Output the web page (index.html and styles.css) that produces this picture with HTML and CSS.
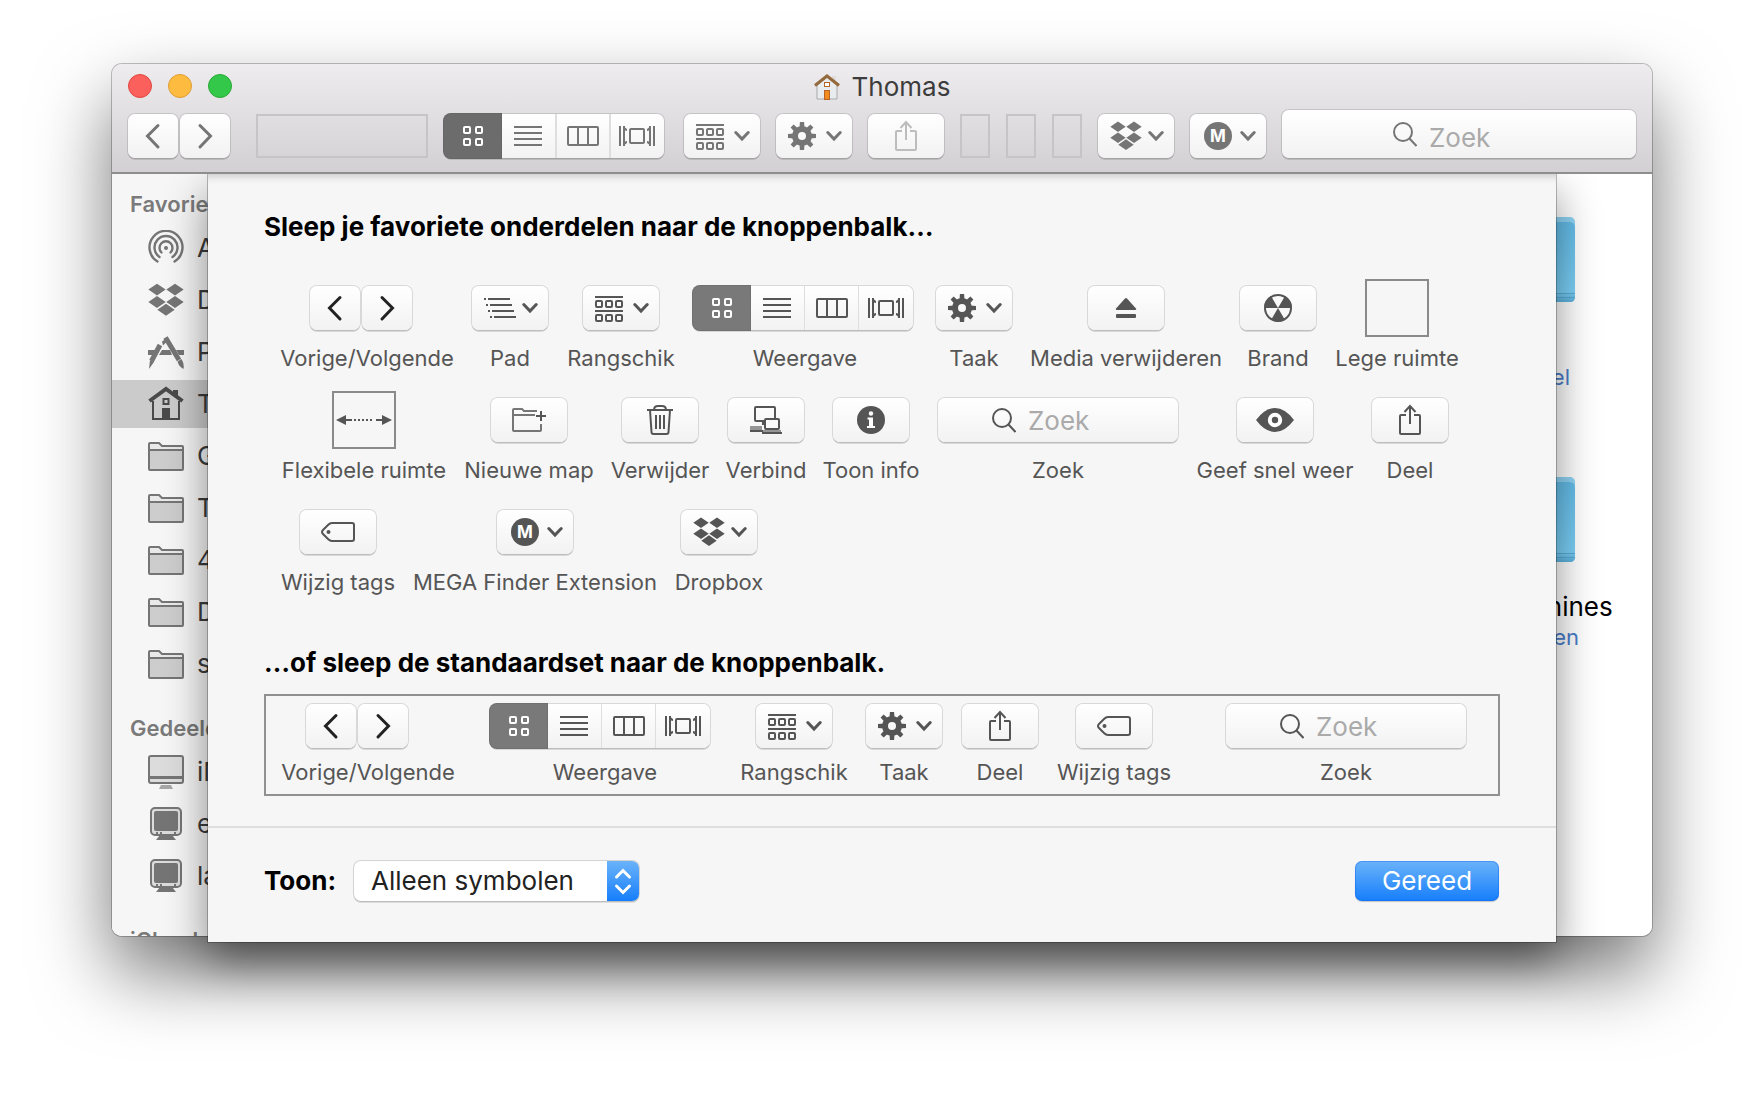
FILE: index.html
```html
<!DOCTYPE html>
<html lang="nl">
<head>
<meta charset="utf-8">
<title>Thomas</title>
<link rel="stylesheet" href="styles.css">
</head>
<body>
<svg class="sprite" aria-hidden="true">
  <symbol id="prev" viewBox="0 0 32 32"><path class="ln3" d="M21 5.500 10.500 16 21 27"/></symbol>
  <symbol id="next" viewBox="0 0 32 32"><path class="ln3" d="M11 5.500 21.500 16 11 27"/></symbol>
  <symbol id="chev" viewBox="0 0 16 16"><path class="ln3" d="M1.800 4.500 8 11l6.200-6.500"/></symbol>
  <symbol id="grid" viewBox="0 0 32 32"><g class="ln"><rect x="7" y="7" width="6" height="6" rx="1"/><rect x="19" y="7" width="6" height="6" rx="1"/><rect x="7" y="19" width="6" height="6" rx="1"/><rect x="19" y="19" width="6" height="6" rx="1"/></g></symbol>
  <symbol id="list" viewBox="0 0 32 32"><path class="ln" d="M2 7h28M2 13h28M2 19h28M2 25h28"/></symbol>
  <symbol id="cols" viewBox="0 0 32 32"><path class="ln" d="M11 7v18M21 7v18"/><rect class="ln" x="1" y="7" width="30" height="18" rx="1"/></symbol>
  <symbol id="flow" viewBox="0 0 36 32"><path class="ln" d="M1 6v20M35 6v20M5 6v20M31 6v20"/><path class="fl" d="M4 6l4 3v2l-4-1zM4 26l4-3v-2l-4 1zM32 6l-4 3v2l4-1zM32 26l-4-3v-2l4 1z"/><rect class="ln" x="11" y="9" width="14" height="14" rx="1"/></symbol>
  <symbol id="arrange" viewBox="0 0 32 32"><path class="ln" d="M0 5h28M0 19h28"/><g class="ln"><rect x="1" y="9" width="6" height="6" rx="1"/><rect x="11" y="9" width="6" height="6" rx="1"/><rect x="21" y="9" width="6" height="6" rx="1"/><rect x="1" y="23" width="6" height="6" rx="1"/><rect x="11" y="23" width="6" height="6" rx="1"/><rect x="21" y="23" width="6" height="6" rx="1"/></g></symbol>
  <symbol id="path" viewBox="0 0 32 32"><path class="ln" d="M0 7h2M4 7h22M2 13h2M6 13h22M4 19h2M8 19h22M6 25h2M10 25h22"/></symbol>
  <symbol id="gear" viewBox="0 0 32 32"><g class="fl"><circle class="gear-ring" cx="14" cy="16" r="7"/><path id="tooth" d="M11.500 8l.4-6h4.200l.4 6zM11.500 24l.4 6h4.200l.4-6z"/><use href="#tooth" transform="rotate(45 14 16)"/><use href="#tooth" transform="rotate(90 14 16)"/><use href="#tooth" transform="rotate(135 14 16)"/></g></symbol>
  <symbol id="share" viewBox="0 0 32 32"><path class="ln" d="M12 11H7a1 1 0 0 0-1 1v17a1 1 0 0 0 1 1h18a1 1 0 0 0 1-1V12a1 1 0 0 0-1-1h-5M16 20V2M10.500 8 16 2l5.500 6"/></symbol>
  <symbol id="dropbox" viewBox="0 0 32 32"><path class="fl" d="M8 1.500l7.700 5.200L8 12 .300 6.700zM24 1.500l7.700 5.200L24 12l-7.700-5.300zM8 12.500l7.700 5.200L8 23 .300 17.700zM24 12.500l7.700 5.200L24 23l-7.700-5.300zM16 19.300l7.700 5.400L16 30l-7.700-5.300z"/></symbol>
  <symbol id="mega" viewBox="0 0 32 32"><circle class="fl" cx="16" cy="16" r="14"/><text class="mega-m" x="16" y="22" text-anchor="middle">M</text></symbol>
  <symbol id="eject" viewBox="0 0 32 32"><path class="fl" d="M15 6.400q1-1 2 0l9 10q.8 1.600-1 1.600H7q-1.800 0-1-1.600z"/><rect class="fl" x="6" y="22" width="20" height="4" rx="1"/></symbol>
  <symbol id="burn" viewBox="0 0 32 32"><circle class="ln" cx="16" cy="16" r="13"/><path class="fl" d="M16 16 9 3.900A14 14 0 0 0 2 16zM16 16l7-12.100A14 14 0 0 1 30 16zM16 16l-7 12.100a14 14 0 0 0 14 0z"/></symbol>
  <symbol id="stretch" viewBox="0 0 60 58"><path class="fl" d="M2 27l10-5v10zM58 27l-10-5v10z"/><path class="ln" d="M11 27h7M42 27h7M20 27h2M24 27h2M28 27h2M32 27h2M36 27h2"/></symbol>
  <symbol id="newfolder" viewBox="0 0 36 32"><path class="ln soft" d="M26 7H13l-2-2H3a1 1 0 0 0-1 1v20a1 1 0 0 0 1 1h26a1 1 0 0 0 1-1v-6M2 11h22"/><path class="ln" d="M30 7v10M25 12h10"/></symbol>
  <symbol id="trash" viewBox="0 0 32 32"><path class="ln" d="M3 6h26M6 6l1.500 22a2 2 0 0 0 2 2h13a2 2 0 0 0 2-2L26 6M10 6q0-4 4-4h4q4 0 4 4M12 11v14M16 11v14M20 11v14"/></symbol>
  <symbol id="connect" viewBox="0 0 32 32"><rect class="ln" x="5" y="3" width="20" height="14" rx="1"/><path class="hf" d="M0 22h12v4H0zM13 26h18v2H13z"/><path class="fl" d="M0 26h13v2H0zM12 28h20v2H12zM12 18h3v3h-3z"/><rect class="ln lap" x="15" y="15" width="14" height="10" rx="1"/></symbol>
  <symbol id="info" viewBox="0 0 32 32"><circle class="fl" cx="16" cy="16" r="14"/><circle class="wh" cx="16" cy="9.500" r="2.200"/><path class="wh" d="M12.500 13.500h5.500v8.500h2v2h-8v-2h2v-6.500h-1.500z"/></symbol>
  <symbol id="eye" viewBox="0 0 40 32"><path class="fl" d="M1 16Q10 4 20 4t19 12Q30 28 20 28T1 16z"/><circle class="pupil" cx="20" cy="16" r="5.200"/></symbol>
  <symbol id="tag" viewBox="0 0 36 32"><path class="ln" d="M12 7h20a2 2 0 0 1 2 2v14a2 2 0 0 1-2 2H12q-2 0-4-2l-5-5q-2-2 0-4l5-5q2-2 4-2z"/><circle class="fl" cx="8.500" cy="16" r="2"/></symbol>
  <symbol id="glass" viewBox="0 0 24 26"><circle class="ln" cx="10" cy="11" r="9"/><path class="ln" d="M16.500 17.500 23.500 25"/></symbol>

  <symbol id="airdrop" viewBox="0 0 36 36"><g class="ln2"><path d="M9.500 31.500A16.500 16.500 0 1 1 26.500 31.500"/><path d="M11.500 27A11.500 11.500 0 1 1 24.500 27"/><path d="M13.500 22.500A6.500 6.500 0 1 1 22.500 22.500"/></g><circle class="fl" cx="18" cy="18" r="2"/></symbol>
  <symbol id="apps" viewBox="0 0 36 36"><path class="fl" d="M0 16h9l-3 5H0zM14 16h8l2 5H11zM28 16h8v5h-5z"/><path class="tool" d="M12 11 3.500 27M17.500 3.500 31 26"/><path class="fl" d="M14 7.500l3-2 1 3-3 3zM2 26l4 2-5 7zM29.500 27.500l4-2.500q3 5 2 10-5-3-6-7.500z"/></symbol>
  <symbol id="home" viewBox="0 0 36 36"><path class="ln" d="M5 15v18h26V15"/><path class="roof" d="M1.500 15 18 3l16.500 12"/><path class="fl" d="M25 4h5v8l-5-4zM14 22h8v11h-8z"/><rect class="ln" x="15.500" y="13" width="5" height="5"/></symbol>
  <symbol id="folder" viewBox="0 0 36 36"><path class="fold-back" d="M1 12V6a1 1 0 0 1 1-1h9l3 3h20a1 1 0 0 1 1 1v3z"/><rect class="fold" x="1" y="12" width="34" height="20" rx="1"/></symbol>
  <symbol id="imac" viewBox="0 0 36 36"><path class="hf" d="M13 31h10l2 4H11z"/><rect class="scr" x="1" y="2" width="34" height="27" rx="2"/><path class="fl" d="M1 22h34v3H1z"/></symbol>
  <symbol id="crt" viewBox="0 0 36 36"><path class="fl" d="M12 29h12l4 5H8z"/><rect class="scr" x="3" y="2" width="30" height="27" rx="4"/><rect class="fl" x="6" y="5" width="24" height="20" rx="2"/><path class="fl" d="M8 26h2v2H8zM12 26h2v2h-2zM26 26h2v2h-2z"/></symbol>
  <linearGradient id="blue" x1="0" y1="0" x2="0" y2="1"><stop offset="0" stop-color="#64bde9"/><stop offset=".88" stop-color="#7cd1f8"/><stop offset="1" stop-color="#5db3e0"/></linearGradient>
  <symbol id="bigfolder" viewBox="0 0 130 86"><rect x="0" y="0" width="130" height="85" rx="5" fill="#8fd4f5"/><path d="M0 5h124q6 0 6 6v69q0 5-5 5H5q-5 0-5-5z" fill="url(#blue)"/><path d="M0 76.500h130M0 80.500h130" stroke="#58acd8" stroke-width="1"/></symbol>
</svg>

<main class="window">
  <header class="titlebar">
    <div class="title-row">
      <div class="lights">
        <button class="light red" aria-label="Sluit"></button>
        <button class="light amber" aria-label="Minimaliseer"></button>
        <button class="light green" aria-label="Vergroot"></button>
      </div>
      <h1 class="title">
        <svg class="title-icon" viewBox="0 0 26 26" aria-hidden="true"><path d="M18 2h4v7h-4z" fill="#ddd"/><path d="M3 11 13 3l10 8v14H3z" fill="#e9ecee" stroke="#a8a8a8"/><path d="M1 11.500 13 2l12 9.500" fill="none" stroke="#94693b" stroke-width="3"/><rect x="10.500" y="8.500" width="5" height="4" fill="#fff" stroke="#b5652a"/><rect x="10.500" y="16.500" width="5" height="9" fill="#f28c1e" stroke="#b5652a"/></svg>
        Thomas
      </h1>
    </div>
    <div class="toolbar">
      <div class="nav">
        <button class="btn" aria-label="Vorige"><svg class="ic"><use href="#prev"/></svg></button>
        <button class="btn" aria-label="Volgende"><svg class="ic"><use href="#next"/></svg></button>
      </div>
      <div class="space space-wide"></div>
      <div class="seg">
        <button class="on" aria-label="Symbolen"><svg class="ic"><use href="#grid"/></svg></button>
        <button aria-label="Lijst"><svg class="ic"><use href="#list"/></svg></button>
        <button aria-label="Kolommen"><svg class="ic"><use href="#cols"/></svg></button>
        <button aria-label="Cover Flow"><svg class="ic ic-36"><use href="#flow"/></svg></button>
      </div>
      <button class="btn menu" aria-label="Rangschik"><svg class="ic"><use href="#arrange"/></svg><svg class="chev"><use href="#chev"/></svg></button>
      <button class="btn menu" aria-label="Taak"><svg class="ic"><use href="#gear"/></svg><svg class="chev"><use href="#chev"/></svg></button>
      <button class="btn" aria-label="Deel" disabled><svg class="ic"><use href="#share"/></svg></button>
      <div class="space"></div>
      <div class="space"></div>
      <div class="space"></div>
      <button class="btn menu" aria-label="Dropbox"><svg class="ic"><use href="#dropbox"/></svg><svg class="chev"><use href="#chev"/></svg></button>
      <button class="btn menu" aria-label="MEGA"><svg class="ic"><use href="#mega"/></svg><svg class="chev"><use href="#chev"/></svg></button>
      <label class="search"><svg class="glass"><use href="#glass"/></svg><input type="search" placeholder="Zoek" aria-label="Zoek"></label>
    </div>
  </header>

  <div class="body">
    <nav class="sidebar">
      <h2>Favorieten</h2>
      <ul>
        <li><a href="#"><svg><use href="#airdrop"/></svg>AirDrop</a></li>
        <li><a href="#"><svg><use href="#dropbox"/></svg>Drop</a></li>
        <li><a href="#"><svg><use href="#apps"/></svg>Pro</a></li>
        <li><a href="#" class="current"><svg><use href="#home"/></svg>Tho</a></li>
        <li><a href="#"><svg><use href="#folder"/></svg>G</a></li>
        <li><a href="#"><svg><use href="#folder"/></svg>T</a></li>
        <li><a href="#"><svg><use href="#folder"/></svg>4</a></li>
        <li><a href="#"><svg><use href="#folder"/></svg>D</a></li>
        <li><a href="#"><svg><use href="#folder"/></svg>s</a></li>
      </ul>
      <h2>Gedeeld</h2>
      <ul>
        <li><a href="#"><svg><use href="#imac"/></svg>iMac</a></li>
        <li><a href="#"><svg><use href="#crt"/></svg>e</a></li>
        <li><a href="#"><svg><use href="#crt"/></svg>la</a></li>
      </ul>
      <h2>iCloud</h2>
    </nav>
    <section class="files">
      <div class="file"><svg class="file-icon"><use href="#bigfolder"/></svg><span class="file-name"></span><span class="file-note">1 onderdeel</span></div>
      <div class="file"><svg class="file-icon"><use href="#bigfolder"/></svg><span class="file-name">Virtual Machines</span><span class="file-note">4 onderdelen</span></div>
    </section>
  </div>

  <section class="sheet">
    <div class="palette">
      <h2>Sleep je favoriete onderdelen naar de knoppenbalk…</h2>
      <div class="row row-1">
        <div class="item"><div class="pic pic-nav"><div class="nav"><button class="btn" aria-label="Vorige"><svg class="ic"><use href="#prev"/></svg></button><button class="btn" aria-label="Volgende"><svg class="ic"><use href="#next"/></svg></button></div></div><span>Vorige/Volgende</span></div>
        <div class="item"><div class="pic"><button class="btn menu" aria-label="Pad"><svg class="ic"><use href="#path"/></svg><svg class="chev"><use href="#chev"/></svg></button></div><span>Pad</span></div>
        <div class="item"><div class="pic"><button class="btn menu" aria-label="Rangschik"><svg class="ic"><use href="#arrange"/></svg><svg class="chev"><use href="#chev"/></svg></button></div><span>Rangschik</span></div>
        <div class="item"><div class="pic pic-seg"><div class="seg"><button class="on" aria-label="Symbolen"><svg class="ic"><use href="#grid"/></svg></button><button aria-label="Lijst"><svg class="ic"><use href="#list"/></svg></button><button aria-label="Kolommen"><svg class="ic"><use href="#cols"/></svg></button><button aria-label="Cover Flow"><svg class="ic ic-36"><use href="#flow"/></svg></button></div></div><span>Weergave</span></div>
        <div class="item"><div class="pic"><button class="btn menu" aria-label="Taak"><svg class="ic"><use href="#gear"/></svg><svg class="chev"><use href="#chev"/></svg></button></div><span>Taak</span></div>
        <div class="item"><div class="pic"><button class="btn" aria-label="Media verwijderen"><svg class="ic"><use href="#eject"/></svg></button></div><span>Media verwijderen</span></div>
        <div class="item"><div class="pic"><button class="btn" aria-label="Brand"><svg class="ic"><use href="#burn"/></svg></button></div><span>Brand</span></div>
        <div class="item"><div class="pic"><div class="gap-box"></div></div><span>Lege ruimte</span></div>
      </div>
      <div class="row row-2">
        <div class="item"><div class="pic"><div class="gap-box"><svg class="stretch"><use href="#stretch"/></svg></div></div><span>Flexibele ruimte</span></div>
        <div class="item"><div class="pic"><button class="btn" aria-label="Nieuwe map"><svg class="ic ic-36"><use href="#newfolder"/></svg></button></div><span>Nieuwe map</span></div>
        <div class="item"><div class="pic"><button class="btn" aria-label="Verwijder"><svg class="ic"><use href="#trash"/></svg></button></div><span>Verwijder</span></div>
        <div class="item"><div class="pic"><button class="btn" aria-label="Verbind"><svg class="ic"><use href="#connect"/></svg></button></div><span>Verbind</span></div>
        <div class="item"><div class="pic"><button class="btn" aria-label="Toon info"><svg class="ic"><use href="#info"/></svg></button></div><span>Toon info</span></div>
        <div class="item"><div class="pic"><label class="search"><svg class="glass"><use href="#glass"/></svg><input type="search" placeholder="Zoek" aria-label="Zoek"></label></div><span>Zoek</span></div>
        <div class="item"><div class="pic"><button class="btn" aria-label="Geef snel weer"><svg class="ic ic-40"><use href="#eye"/></svg></button></div><span>Geef snel weer</span></div>
        <div class="item"><div class="pic"><button class="btn" aria-label="Deel"><svg class="ic"><use href="#share"/></svg></button></div><span>Deel</span></div>
      </div>
      <div class="row row-3">
        <div class="item"><div class="pic"><button class="btn" aria-label="Wijzig tags"><svg class="ic ic-36"><use href="#tag"/></svg></button></div><span>Wijzig tags</span></div>
        <div class="item"><div class="pic"><button class="btn menu" aria-label="MEGA Finder Extension"><svg class="ic"><use href="#mega"/></svg><svg class="chev"><use href="#chev"/></svg></button></div><span>MEGA Finder Extension</span></div>
        <div class="item"><div class="pic"><button class="btn menu" aria-label="Dropbox"><svg class="ic"><use href="#dropbox"/></svg><svg class="chev"><use href="#chev"/></svg></button></div><span>Dropbox</span></div>
      </div>
      <h2>…of sleep de standaardset naar de knoppenbalk.</h2>
      <div class="default-set">
        <div class="item set-nav"><div class="pic"><div class="nav"><button class="btn" aria-label="Vorige"><svg class="ic"><use href="#prev"/></svg></button><button class="btn" aria-label="Volgende"><svg class="ic"><use href="#next"/></svg></button></div></div><span>Vorige/Volgende</span></div>
        <div class="item set-view"><div class="pic pic-seg"><div class="seg"><button class="on" aria-label="Symbolen"><svg class="ic"><use href="#grid"/></svg></button><button aria-label="Lijst"><svg class="ic"><use href="#list"/></svg></button><button aria-label="Kolommen"><svg class="ic"><use href="#cols"/></svg></button><button aria-label="Cover Flow"><svg class="ic ic-36"><use href="#flow"/></svg></button></div></div><span>Weergave</span></div>
        <div class="item set-arrange"><div class="pic"><button class="btn menu" aria-label="Rangschik"><svg class="ic"><use href="#arrange"/></svg><svg class="chev"><use href="#chev"/></svg></button></div><span>Rangschik</span></div>
        <div class="item set-small"><div class="pic"><button class="btn menu" aria-label="Taak"><svg class="ic"><use href="#gear"/></svg><svg class="chev"><use href="#chev"/></svg></button></div><span>Taak</span></div>
        <div class="item set-small"><div class="pic"><button class="btn" aria-label="Deel"><svg class="ic"><use href="#share"/></svg></button></div><span>Deel</span></div>
        <div class="item set-tags"><div class="pic"><button class="btn" aria-label="Wijzig tags"><svg class="ic ic-36"><use href="#tag"/></svg></button></div><span>Wijzig tags</span></div>
        <div class="item set-search"><div class="pic"><label class="search"><svg class="glass"><use href="#glass"/></svg><input type="search" placeholder="Zoek" aria-label="Zoek"></label></div><span>Zoek</span></div>
      </div>
    </div>
    <footer class="footer">
      <label class="show-label" for="show">Toon:</label>
      <div class="popup">
        <select id="show"><option>Alleen symbolen</option></select>
        <svg class="popup-arrows" viewBox="0 0 32 40" aria-hidden="true"><path d="M9.500 16 16 9.500l6.500 6.500M9.500 25l6.500 6.500 6.500-6.500"/></svg>
      </div>
      <button class="done">Gereed</button>
    </footer>
  </section>
</main>
</body>
</html>
```
FILE: styles.css
```css
* {
  box-sizing: border-box;
}

body {
  margin: 0;
  height: 100vh;
  padding: 64px 112px 160px;
  overflow: hidden;
  background: #fff;
  color: #000;
  font: 26px/32px Inter, "Liberation Sans", sans-serif;
}

h1, h2, ul {
  margin: 0;
  padding: 0;
  list-style: none;
}

button, input, select {
  margin: 0;
  padding: 0;
  border: 0;
  font: inherit;
}

svg {
  display: block;
  flex: none;
}

.sprite {
  position: absolute;
  width: 0;
  height: 0;
}

/* Icon strokes and fills */
.ln, .ln2, .ln3 {
  fill: none;
  stroke: currentColor;
  stroke-width: 2;
}
.ln2 {
  stroke-width: 2.4;
  stroke-linecap: round;
}
.ln3 {
  stroke-width: 3;
  stroke-linecap: round;
}
.fl { fill: currentColor; }
.hf { fill: currentColor; opacity: 0.6; }
.soft { opacity: 0.8; }
.wh { fill: #fff; }
.lap { fill: #fafafa; }
.gear-ring { fill: none; stroke: currentColor; stroke-width: 6; }
.pupil { fill: currentColor; stroke: #fff; stroke-width: 4; }
.mega-m { fill: #fff; font: 700 17px Inter, sans-serif; }
.tool { fill: none; stroke: currentColor; stroke-width: 5; }
.roof { fill: none; stroke: currentColor; stroke-width: 4; }
.fold, .fold-back { fill: #cdcdcd; stroke: currentColor; stroke-width: 2; }
.fold-back { fill: #e9e9e9; }
.scr { fill: #dcdcdc; stroke: currentColor; stroke-width: 2; }

/* Window */
.window {
  position: relative;
  display: flex;
  flex-direction: column;
  height: 100%;
  min-height: 640px;
  border-radius: 10px;
  box-shadow: 0 0 0 1px rgba(0, 0, 0, 0.24), 0 36px 76px rgba(0, 0, 0, 0.55);
}

.titlebar {
  border-bottom: 2px solid #8e8e8e;
  border-radius: 10px 10px 0 0;
  padding: 0 16px 14px;
  background: linear-gradient(#eeecef, #d2d0d3);
  color: #757575;
}

.title-row {
  display: grid;
  grid-template-columns: 1fr auto 1fr;
  align-items: center;
  height: 44px;
  margin-bottom: 2px;
}

.lights {
  display: flex;
  gap: 16px;
}

.light {
  width: 24px;
  height: 24px;
  border: 1px solid;
  border-radius: 50%;
}
.red { background: #fc605c; border-color: #e2453f; }
.amber { background: #fdbc40; border-color: #df9d33; }
.green { background: #34c84a; border-color: #27a934; }

.title {
  display: flex;
  align-items: center;
  gap: 12px;
  padding-top: 2px;
  color: #3c3c3c;
  font-size: 26px;
  font-weight: 400;
}

.title-icon {
  width: 26px;
  height: 26px;
}

.toolbar {
  display: flex;
  align-items: flex-end;
  gap: 16px;
}

.toolbar .nav { margin-right: 10px; }
.toolbar .seg { margin-right: 4px; }
.toolbar .search {
  flex: 1;
  height: 48px;
}
.toolbar .search input { padding-top: 8px; }

.space {
  width: 30px;
  height: 44px;
  border: 2px solid #c5c4c6;
}
.space-wide { width: 172px; }

/* Controls */
.btn, .seg, .search {
  height: 44px;
  border-radius: 7px;
  background: linear-gradient(#fff, #f2f2f2);
  box-shadow: 0 0 0 1px rgba(0, 0, 0, 0.12), 0 2px 0 rgba(0, 0, 0, 0.12);
  color: inherit;
}

.btn {
  display: flex;
  align-items: center;
  justify-content: center;
  width: 76px;
}
.btn:disabled { color: #bdbdbd; }

.menu {
  justify-content: flex-start;
  gap: 6px;
  padding-left: 12px;
}

.nav {
  display: flex;
  gap: 2px;
}
.nav .btn { width: 50px; }

.ic {
  width: 32px;
  height: 32px;
}
.ic-36 { width: 36px; }
.ic-40 { width: 40px; }

.chev {
  width: 16px;
  height: 16px;
}

.seg {
  display: flex;
  width: 220px;
}

.seg button {
  display: flex;
  flex: none;
  align-items: center;
  justify-content: center;
  width: 54px;
  border-left: 2px solid #dedede;
  background: none;
  color: inherit;
}
.seg button:nth-child(2) { border-left: 0; }

.seg .on {
  width: 57px;
  border-left: 0;
  border-radius: 7px 0 0 7px;
  background: #6c6c6c;
  box-shadow: 0 0 0 1px #666;
  color: #fff;
}

.search {
  display: flex;
  align-items: center;
  justify-content: center;
  gap: 12px;
  width: 240px;
}

.search input {
  width: 96px;
  padding-top: 2px;
  background: none;
  outline: 0;
  appearance: none;
}
.search input::placeholder {
  color: #aaa;
  opacity: 1;
}

.glass {
  width: 24px;
  height: 26px;
}

/* Window contents behind the sheet */
.body {
  display: flex;
  flex: 1;
  min-height: 0;
  overflow: hidden;
  border-radius: 0 0 10px 10px;
  background: #fff;
}

.sidebar {
  flex: none;
  width: 300px;
  padding-top: 12px;
  background: #f6f6f6;
  color: #7a7a7a;
}

.sidebar h2 {
  padding-left: 18px;
  font-size: 22px;
  font-weight: 600;
  line-height: 36px;
}
.sidebar ul + h2 { margin-top: 22px; }

.sidebar ul {
  display: grid;
  gap: 4px;
  padding-top: 2px;
}

.sidebar a {
  display: flex;
  align-items: center;
  gap: 13px;
  height: 48px;
  padding-left: 36px;
  color: #3c3c3c;
  text-decoration: none;
}

.sidebar svg {
  width: 36px;
  height: 36px;
  color: #757575;
}

.current { background: #cbcbcb; }
.sidebar .current svg { color: #4a4a4a; }

.files {
  flex: 1;
  display: flex;
  flex-direction: column;
  align-items: flex-end;
  padding: 43px 32px 0;
}

.file {
  display: flex;
  flex-direction: column;
  align-items: center;
  width: 220px;
  height: 260px;
}

.file-icon {
  width: 130px;
  height: 86px;
  margin-bottom: 28px;
}

.file-name { height: 32px; }

.file-note {
  color: #4a7cc9;
  font-size: 22px;
  line-height: 28px;
}

/* Customisation sheet */
.sheet {
  position: absolute;
  top: 110px;
  left: 96px;
  right: 96px;
  background: #f6f6f6;
  box-shadow: inset 0 10px 8px -8px rgba(0, 0, 0, 0.2), 0 0 0 1px rgba(0, 0, 0, 0.25), 0 20px 40px rgba(0, 0, 0, 0.45);
  clip-path: inset(0 -120px -160px);
  color: #555;
}

.palette { padding: 37px 56px 30px; }

.palette h2 {
  color: #000;
  font-size: 26px;
  font-weight: 700;
  line-height: 32px;
}

.row {
  display: grid;
  column-gap: 18px;
  height: 112px;
  padding-left: 17px;
}
.row-1 {
  margin-top: 35px;
  grid-template-columns: 172px 78px 108px 224px 78px 190px 78px 124px;
}
.row-2 { grid-template-columns: 166px 128px 98px 78px 96px 242px 156px 78px; }
.row-3 {
  margin-bottom: 33px;
  grid-template-columns: 114px 244px 88px;
}

.item {
  display: flex;
  flex-direction: column;
  align-items: center;
  font-size: 22px;
  line-height: 28px;
  white-space: nowrap;
}

.item .search { font-size: 26px; }
.item .nav { color: #222; }
.item .seg button { border-left-width: 1px; }
.item .seg button:nth-child(-n + 2) { border-left-width: 0; }
.item .seg .on { background: #797979; box-shadow: 0 0 0 1px #707070; }

.pic {
  display: flex;
  align-items: center;
  justify-content: center;
  width: 100%;
  height: 60px;
  margin-bottom: 6px;
}
.pic-nav { padding-right: 12px; }
.pic-seg { justify-content: flex-start; }

.gap-box {
  width: 64px;
  height: 58px;
  border: 2px solid #8a8a8a;
}

.stretch {
  width: 60px;
  height: 58px;
}

.default-set {
  display: flex;
  gap: 18px;
  height: 102px;
  margin-top: 15px;
  padding: 5px 31px 0 16px;
  border: 2px solid #919191;
}
.default-set .pic {
  height: 50px;
  margin-bottom: 7px;
}
.set-nav { width: 172px; }
.set-nav .pic { padding-right: 22px; }
.set-view { width: 230px; margin-left: 18px; }
.set-arrange { width: 106px; margin-left: 3px; }
.set-small { width: 78px; }
.set-tags { width: 114px; }
.set-search { width: 242px; margin-left: auto; }

.footer {
  display: flex;
  align-items: center;
  height: 116px;
  padding: 0 57px 8px 56px;
  border-top: 2px solid #dedede;
}

.show-label {
  width: 90px;
  color: #000;
  font-weight: 700;
}

.popup {
  position: relative;
  width: 285px;
  height: 40px;
}

.popup select {
  width: 100%;
  height: 100%;
  padding-left: 17px;
  border-radius: 7px;
  background: #fff;
  box-shadow: 0 0 0 1px rgba(0, 0, 0, 0.14), 0 2px 0 rgba(0, 0, 0, 0.1);
  color: #222;
  appearance: none;
}

.popup-arrows {
  position: absolute;
  top: 0;
  right: 0;
  width: 32px;
  height: 40px;
  border-radius: 0 7px 7px 0;
  background: linear-gradient(#6bb3fa, #167efb);
  fill: none;
  stroke: #fff;
  stroke-width: 3;
  stroke-linecap: round;
  pointer-events: none;
}

.done {
  width: 144px;
  height: 40px;
  margin-left: auto;
  border-radius: 7px;
  background: linear-gradient(#6bb3fa, #167efb);
  box-shadow: inset 0 0 0 1px rgba(20, 100, 240, 0.4), 0 1px 1px rgba(0, 0, 0, 0.2);
  color: #fff;
}
```
